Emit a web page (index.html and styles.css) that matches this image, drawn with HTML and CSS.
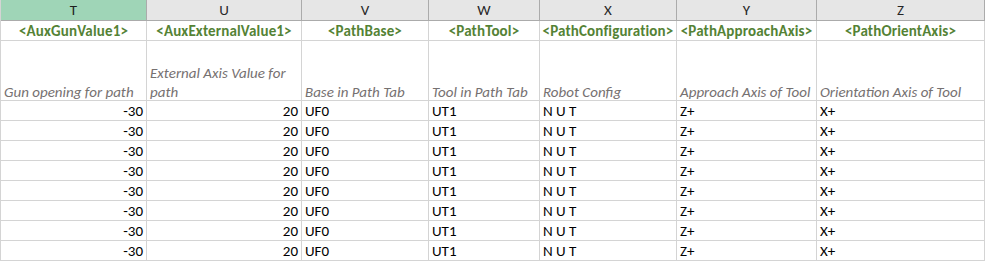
FILE: index.html
```html
<!DOCTYPE html>
<html>
<head>
<meta charset="utf-8">
<link rel="stylesheet" href="styles.css">
</head>
<body>
<div class="sheet">
  <div class="row head">
    <div class="cell hd sel">T</div>
    <div class="cell hd">U</div>
    <div class="cell hd">V</div>
    <div class="cell hd">W</div>
    <div class="cell hd">X</div>
    <div class="cell hd">Y</div>
    <div class="cell hd">Z</div>
  </div>
  <div class="row tags">
    <div class="cell tag">&lt;AuxGunValue1&gt;</div>
    <div class="cell tag">&lt;AuxExternalValue1&gt;</div>
    <div class="cell tag">&lt;PathBase&gt;</div>
    <div class="cell tag">&lt;PathTool&gt;</div>
    <div class="cell tag">&lt;PathConfiguration&gt;</div>
    <div class="cell tag">&lt;PathApproachAxis&gt;</div>
    <div class="cell tag">&lt;PathOrientAxis&gt;</div>
  </div>
  <div class="row desc">
    <div class="cell note"><span class="txt">Gun opening for path</span></div>
    <div class="cell note"><span class="txt">External Axis Value for path</span></div>
    <div class="cell note"><span class="txt">Base in Path Tab</span></div>
    <div class="cell note"><span class="txt">Tool in Path Tab</span></div>
    <div class="cell note"><span class="txt">Robot Config</span></div>
    <div class="cell note"><span class="txt">Approach Axis of Tool</span></div>
    <div class="cell note"><span class="txt">Orientation Axis of Tool</span></div>
  </div>
  <div class="row data"><div class="cell num">-30</div><div class="cell num">20</div><div class="cell">UF0</div><div class="cell">UT1</div><div class="cell">N U T</div><div class="cell">Z+</div><div class="cell">X+</div></div>
  <div class="row data"><div class="cell num">-30</div><div class="cell num">20</div><div class="cell">UF0</div><div class="cell">UT1</div><div class="cell">N U T</div><div class="cell">Z+</div><div class="cell">X+</div></div>
  <div class="row data"><div class="cell num">-30</div><div class="cell num">20</div><div class="cell">UF0</div><div class="cell">UT1</div><div class="cell">N U T</div><div class="cell">Z+</div><div class="cell">X+</div></div>
  <div class="row data"><div class="cell num">-30</div><div class="cell num">20</div><div class="cell">UF0</div><div class="cell">UT1</div><div class="cell">N U T</div><div class="cell">Z+</div><div class="cell">X+</div></div>
  <div class="row data"><div class="cell num">-30</div><div class="cell num">20</div><div class="cell">UF0</div><div class="cell">UT1</div><div class="cell">N U T</div><div class="cell">Z+</div><div class="cell">X+</div></div>
  <div class="row data"><div class="cell num">-30</div><div class="cell num">20</div><div class="cell">UF0</div><div class="cell">UT1</div><div class="cell">N U T</div><div class="cell">Z+</div><div class="cell">X+</div></div>
  <div class="row data"><div class="cell num">-30</div><div class="cell num">20</div><div class="cell">UF0</div><div class="cell">UT1</div><div class="cell">N U T</div><div class="cell">Z+</div><div class="cell">X+</div></div>
  <div class="row data"><div class="cell num">-30</div><div class="cell num">20</div><div class="cell">UF0</div><div class="cell">UT1</div><div class="cell">N U T</div><div class="cell">Z+</div><div class="cell">X+</div></div>
</div>
</body>
</html>
```

FILE: styles.css
```css
html, body {
  margin: 0;
  padding: 0;
  background: #ffffff;
  overflow: hidden;
}

.sheet {
  display: flex;
  flex-direction: column;
  width: 985px;
  border-left: 1px solid #d4d4d4;
  font-family: Calibri, Carlito, Lato, sans-serif;
  font-size: 15px;
  color: #000000;
}

.row {
  display: grid;
  grid-template-columns: 146px 155px 127px 111px 137px 140px 168px;
}

.cell {
  box-sizing: border-box;
  border-right: 1px solid #d4d4d4;
  border-bottom: 1px solid #d4d4d4;
  padding: 0 3px;
  white-space: nowrap;
  overflow: hidden;
  display: flex;
  align-items: center;
}

.head .cell {
  height: 21px;
  background: #e6e6e6;
  border-right-color: #ababab;
  border-bottom-color: #ababab;
  justify-content: center;
  color: #262626;
  font-size: 15px;
}

.head .sel {
  background: #9fd5b7;
  color: #1e1e1e;
}

.tags .cell {
  height: 20px;
  justify-content: center;
  font-weight: bold;
  color: #548235;
  letter-spacing: 0.15px;
  padding: 0;
}

.desc .cell {
  height: 60px;
  align-items: flex-end;
  white-space: normal;
  font-style: italic;
  color: #767171;
  line-height: 19px;
  padding: 0 2px 0 3px;
}

.desc .txt {
  margin-bottom: -2px;
}

.data .cell {
  height: 20px;
}

.data .num {
  justify-content: flex-end;
}
```
